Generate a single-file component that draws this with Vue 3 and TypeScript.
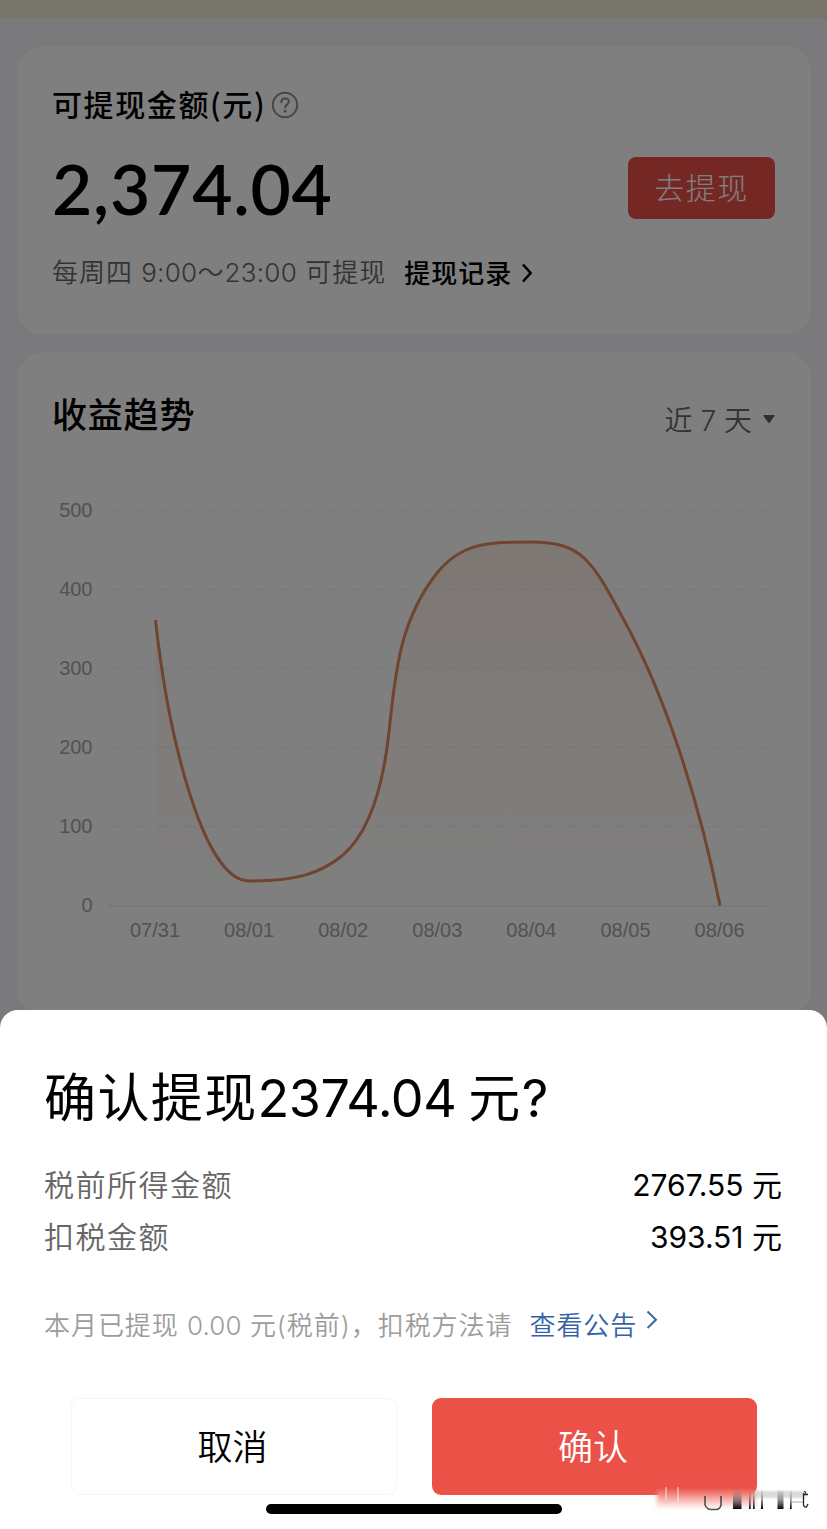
<script setup lang="ts">
const yTicks = [500, 400, 300, 200, 100, 0].map((value) => ({ value, y: 905.5 - value * 0.79 }))
const xTicks = ['07/31', '08/01', '08/02', '08/03', '08/04', '08/05', '08/06'].map((label, i) => ({
  label,
  x: 155 + i * 94.1,
}))
const curve =
  'M155.5 620 C168 735 203 881 249 881 C296 881 320 874 343 855 C366 835 381 797 388 740 ' +
  'C395 683 396 625 437 573 C462 542 490 542 531 542 C582 542 592 560 625 622 C662 690 697 790 720 905.5'
const area = `${curve} L155.5 905.5 Z`
</script>

<template>
  <div class="screen">
    <div class="page">
      <div class="banner"></div>
      <section class="card balance">
        <div class="title-row">
          <span class="title">可提现金额(元)</span>
          <svg class="help" width="28" height="28" viewBox="0 0 28 28" fill="none">
            <circle cx="14" cy="14" r="12.2" stroke="#8c8c90" stroke-width="2" />
            <path d="M10.3 11.2c0-2.2 1.600-3.700 3.800-3.700s3.700 1.400 3.700 3.300c0 2.600-3.600 2.900-3.600 5.800" stroke="#8c8c90" stroke-width="2" stroke-linecap="round" />
            <circle cx="14.1" cy="20.2" r="1.35" fill="#8c8c90" />
          </svg>
        </div>
        <div class="amount-row">
          <span class="amount">2,374.04</span>
          <button class="withdraw">去提现</button>
        </div>
        <div class="note-row">
          <span class="note">每周四 <span class="num">9:00</span>～<span class="num">23:00</span> 可提现</span>
          <span class="record">提现记录</span>
          <svg class="chev" width="12" height="22" viewBox="0 0 12 22" fill="none">
            <path d="M2 2.5 L9.6 11 L2 19.5" stroke="#000" stroke-width="2.6" />
          </svg>
        </div>
      </section>

      <section class="card trend">
        <div class="trend-head">
          <span class="trend-title">收益趋势</span>
          <span class="range">近 7 天</span>
          <svg class="caret" width="12" height="9" viewBox="0 0 12 9"><path d="M1 0h10q1 0 .5 1L6.8 7.600q-.8 1-1.600 0L.5 1Q0 0 1 0Z" fill="#606064" /></svg>
        </div>
        <svg class="chart" width="793" height="500" viewBox="18 470 793 500">
          <defs>
            <linearGradient id="fill" x1="0" y1="542" x2="0" y2="905" gradientUnits="userSpaceOnUse">
              <stop offset="0" stop-color="#f08a50" stop-opacity="0.13" />
              <stop offset="1" stop-color="#f08a50" stop-opacity="0" />
            </linearGradient>
          </defs>
          <g v-for="t in yTicks" :key="t.value">
            <line x1="108" x2="768" :y1="t.y + (t.value ? 0 : 0.5)" :y2="t.y + (t.value ? 0 : 0.5)" :class="t.value ? 'grid' : 'axis'" />
            <text x="92.500" :y="t.y + 6" text-anchor="end" class="tick">{{ t.value }}</text>
          </g>
          <path :d="area" fill="url(#fill)" />
          <path :d="curve" fill="none" stroke="#e0885c" stroke-width="3" />
          <text v-for="t in xTicks" :key="t.label" :x="t.x" y="937" text-anchor="middle" class="tick">{{ t.label }}</text>
        </svg>
      </section>
    </div>

    <div class="mask"></div>

    <section class="sheet">
      <h1 class="confirm-title">确认提现<span class="num">2374.04</span><span class="unit">元</span><span class="mark">?</span></h1>
      <div class="line"><span class="label">税前所得金额</span><span class="value">2767.55 元</span></div>
      <div class="line"><span class="label">扣税金额</span><span class="value">393.51 元</span></div>
      <div class="tip">
        <span class="tip-text">本月已提现 <span class="num">0.00</span> 元(税前)，扣税方法请</span>
        <span class="link">查看公告</span>
        <svg class="link-chev" width="12" height="20" viewBox="0 0 12 20" fill="none">
          <path d="M1.500 1.500 L10 9.700 L1.500 18" stroke="#3c66a0" stroke-width="2" />
        </svg>
      </div>
      <div class="actions">
        <button class="btn cancel">取消</button>
        <button class="btn ok">确认</button>
      </div>
      <div class="home"></div>
      <svg class="smudge" width="160" height="32" viewBox="0 0 160 32" fill="none">
        <defs>
          <linearGradient id="fadeRed" x1="0" y1="0" x2="0" y2="1">
            <stop offset="0" stop-color="#ec5b50" />
            <stop offset="1" stop-color="#fff" />
          </linearGradient>
          <linearGradient id="fadeDark" x1="0" y1="0" x2="0" y2="1">
            <stop offset="0" stop-color="#888" stop-opacity="0.1" />
            <stop offset="1" stop-color="#000" />
          </linearGradient>
          <filter id="soft"><feGaussianBlur stdDeviation="2 1" /></filter>
          <filter id="slight"><feGaussianBlur stdDeviation="0.500 0.2" /></filter>
        </defs>
        <rect x="4" y="13" width="99" height="14" fill="#fff" />
        <rect x="5" y="7" width="98" height="20" fill="url(#fadeRed)" filter="url(#soft)" />
        <path d="M14 5v13M26 5v15" stroke="#fff" stroke-opacity="0.4" stroke-width="2" />
        <rect x="103" y="9" width="50" height="7" fill="#bbb" fill-opacity="0.55" filter="url(#soft)" />
        <path d="M53 14v9q2 4.500 6 4.500h5q4 0 5-4.500v-9" stroke="#222" stroke-opacity="0.8" stroke-width="1.500" />
        <g filter="url(#slight)">
          <rect x="81" y="8" width="8.500" height="19" fill="url(#fadeDark)" />
          <rect x="97" y="8" width="1.700" height="19" fill="url(#fadeDark)" />
          <rect x="101" y="8" width="1.700" height="19" fill="url(#fadeDark)" />
          <rect x="109" y="8" width="2" height="19" fill="url(#fadeDark)" />
          <rect x="125.500" y="8" width="6" height="19" fill="url(#fadeDark)" />
          <rect x="138" y="8" width="1.700" height="19" fill="url(#fadeDark)" />
        </g>
        <path d="M152.500 9l1.500 2.500M151 12.500h5M151.500 11v11q0 3.500 3 3l1.500-3" stroke="#222" stroke-width="1.300" />
        <path d="M139 20h12" stroke="#aaa" stroke-width="1" />
      </svg>
    </section>
  </div>
</template>

<style>
body {
  margin: 0;
}
</style>

<style scoped>
.screen {
  position: relative;
  width: 827px;
  height: 1529px;
  overflow: hidden;
  background: #f5f5fa;
  font-family: Inter, 'Noto Sans CJK SC', sans-serif;
  white-space: nowrap;
  color: #000;
}
.banner {
  height: 19px;
  background: #f1ead9;
}
.card {
  box-sizing: border-box;
  width: 793px;
  margin-left: 18px;
  border-radius: 26px;
  background: #fff;
}
.balance {
  margin-top: 27px;
  height: 289px;
  padding: 39px 36px 0 34px;
}
.title-row {
  display: flex;
  align-items: center;
  height: 40px;
}
.title {
  margin-top: -4px;
  font: 500 30px/40px 'Noto Sans CJK SC', sans-serif;
  letter-spacing: 1.6px;
}
.help {
  margin-left: 5px;
}
.amount-row {
  display: flex;
  justify-content: space-between;
  align-items: center;
  height: 62px;
  margin-top: 32px;
}
.amount {
  font: 600 69.5px/62px Lato, sans-serif;
  letter-spacing: 0.8px;
}
button {
  border: 0;
  padding: 0;
  font-family: 'Noto Sans CJK SC', sans-serif;
}
.withdraw {
  width: 147px;
  height: 62px;
  padding-bottom: 4px;
  border-radius: 8px;
  background: #ea4f46;
  color: #fff;
  font-size: 30px;
  font-weight: 300;
  letter-spacing: 1.5px;
}
.note-row {
  display: flex;
  align-items: center;
  height: 40px;
  margin-top: 34px;
}
.note {
  font: 350 26px/40px Inter, 'Noto Sans CJK SC', sans-serif;
  letter-spacing: 0.95px;
  color: #66666b;
}
.num {
  letter-spacing: 0.3px;
}
.record {
  margin: -2px 0 0 18px;
  font: 500 26px/40px 'Noto Sans CJK SC', sans-serif;
  letter-spacing: 1px;
}
.chev {
  margin-left: 9px;
}
.trend {
  margin-top: 17px;
  height: 664px;
  padding-top: 38px;
}
.trend-head {
  display: flex;
  align-items: center;
  height: 50px;
  padding: 0 36px 0 34px;
}
.trend-title {
  flex: 1;
  margin-top: -4px;
  font: 500 35px/50px 'Noto Sans CJK SC', sans-serif;
  letter-spacing: 0.8px;
}
.range {
  margin-top: 8px;
  font-size: 28px;
  font-weight: 350;
  color: #66666b;
}
.caret {
  margin: 8px 0 0 11px;
}
.chart {
  display: block;
  margin-top: 30px;
}
.grid {
  stroke: #f0f1f8;
  stroke-width: 1.5;
  stroke-dasharray: 16 8;
}
.axis {
  stroke: #f0f0f3;
  stroke-width: 2;
}
.tick {
  font: 20px 'Liberation Sans', sans-serif;
  fill: #a4a4a8;
}
.mask {
  position: absolute;
  inset: 0;
  background: rgba(0, 0, 0, 0.5);
}
.sheet {
  position: absolute;
  left: 0;
  right: 0;
  bottom: 0;
  box-sizing: border-box;
  height: 519px;
  padding: 53px 45px 0 44px;
  border-radius: 18px 18px 0 0;
  background: #fff;
}
.confirm-title {
  margin: 0 0 24px;
  font: 400 52px/72px Inter, 'Noto Sans CJK SC', sans-serif;
  letter-spacing: 1.4px;
}
.confirm-title .num {
  letter-spacing: -0.5px;
}
.unit {
  margin-left: 12px;
}
.mark {
  letter-spacing: 0;
}
.line {
  display: flex;
  justify-content: space-between;
  height: 52px;
  line-height: 52px;
  font-size: 30px;
}
.label {
  font-weight: 350;
  letter-spacing: 1.5px;
  color: #666;
}
.tip {
  display: flex;
  align-items: center;
  height: 40px;
  margin-top: 43px;
  font-size: 26px;
  line-height: 40px;
  font-weight: 350;
  color: #9c9c9c;
}
.tip-text,
.link {
  letter-spacing: 0.95px;
}
.tip-text .num {
  letter-spacing: 0.1px;
}
.link {
  margin-left: 17px;
  color: #3462a8;
}
.link-chev {
  margin: -12px 0 0 9px;
}
.actions {
  display: flex;
  gap: 35px;
  margin: 52px 0 0 27px;
}
.btn {
  box-sizing: border-box;
  height: 97px;
  padding: 0 3px 4px 0;
  border-radius: 9px;
  font-size: 35px;
  font-weight: 350;
}
.cancel {
  width: 326px;
  border: 1.500px solid #f5f5f5;
  background: #fff;
  color: #000;
}
.ok {
  width: 325px;
  background: #eb5147;
  color: #fff;
}
.home {
  width: 296px;
  height: 10px;
  margin: 9px 0 0 222px;
  border-radius: 5px;
  background: #000;
}
.smudge {
  position: absolute;
  left: 652px;
  bottom: 15px;
}
</style>
